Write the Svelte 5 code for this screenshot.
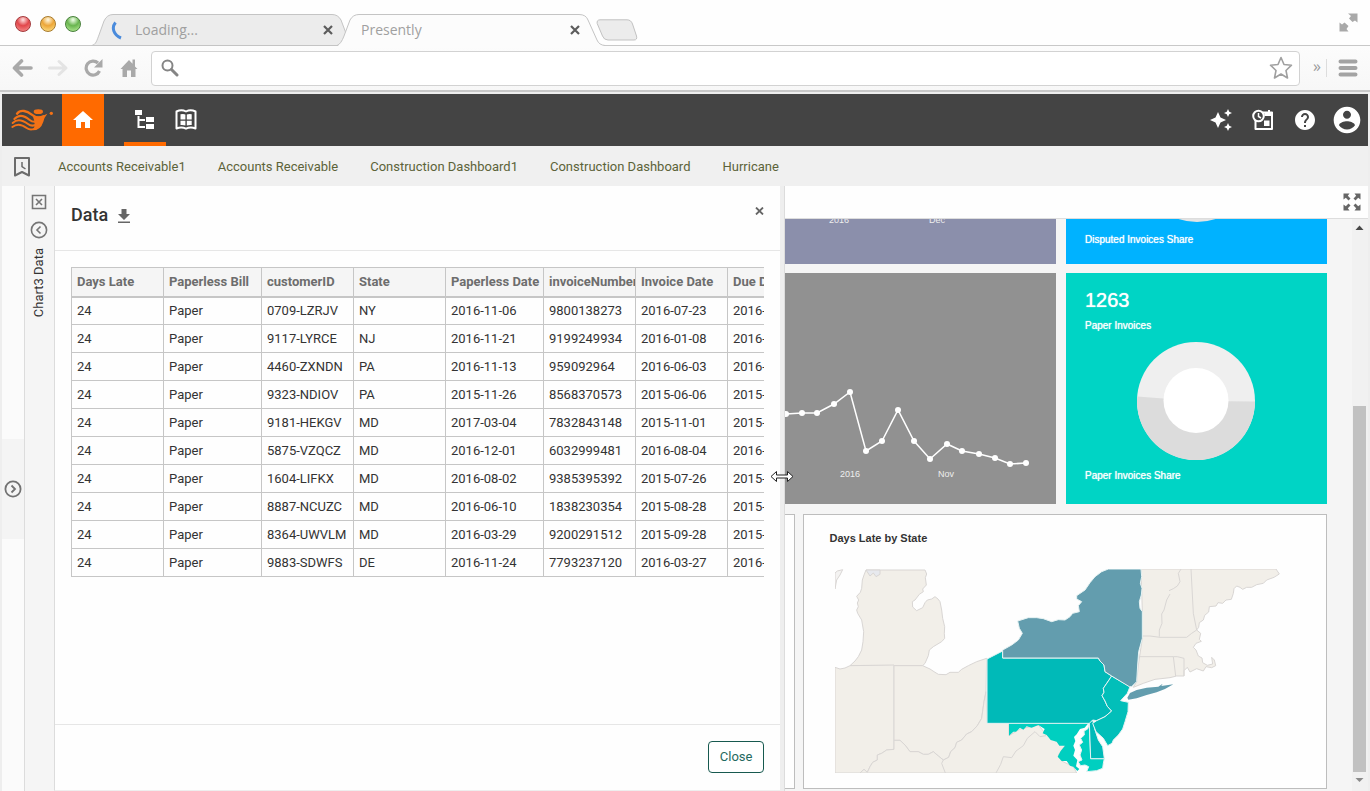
<script>
  const shortcuts = [
    'Accounts Receivable1',
    'Accounts Receivable',
    'Construction Dashboard1',
    'Construction Dashboard',
    'Hurricane'
  ];

  const columns = [
    { name: 'Days Late', width: 92 },
    { name: 'Paperless Bill', width: 98 },
    { name: 'customerID', width: 92 },
    { name: 'State', width: 92 },
    { name: 'Paperless Date', width: 98 },
    { name: 'invoiceNumber', width: 92 },
    { name: 'Invoice Date', width: 92 },
    { name: 'Due Date', width: 92 }
  ];
  const tableWidth = columns.reduce((sum, c) => sum + c.width, 0);

  const rows = [
    ['24', 'Paper', '0709-LZRJV', 'NY', '2016-11-06', '9800138273', '2016-07-23', '2016-08-22'],
    ['24', 'Paper', '9117-LYRCE', 'NJ', '2016-11-21', '9199249934', '2016-01-08', '2016-02-07'],
    ['24', 'Paper', '4460-ZXNDN', 'PA', '2016-11-13', '959092964', '2016-06-03', '2016-07-03'],
    ['24', 'Paper', '9323-NDIOV', 'PA', '2015-11-26', '8568370573', '2015-06-06', '2015-07-06'],
    ['24', 'Paper', '9181-HEKGV', 'MD', '2017-03-04', '7832843148', '2015-11-01', '2015-12-01'],
    ['24', 'Paper', '5875-VZQCZ', 'MD', '2016-12-01', '6032999481', '2016-08-04', '2016-09-03'],
    ['24', 'Paper', '1604-LIFKX', 'MD', '2016-08-02', '9385395392', '2015-07-26', '2015-08-25'],
    ['24', 'Paper', '8887-NCUZC', 'MD', '2016-06-10', '1838230354', '2015-08-28', '2015-09-27'],
    ['24', 'Paper', '8364-UWVLM', 'MD', '2016-03-29', '9200291512', '2015-09-28', '2015-10-28'],
    ['24', 'Paper', '9883-SDWFS', 'DE', '2016-11-24', '7793237120', '2016-03-27', '2016-04-26']
  ];

  const points = [
    [1, 141], [17, 140], [32, 140], [49, 131], [65, 119], [81, 178], [97, 168], [113, 137],
    [129, 168], [145, 186], [162, 171], [177, 178], [194, 181], [210, 185], [225, 191], [241, 190]
  ];
  const line = points.map((p) => p.join(',')).join(' ');
</script>

<div class="window">
  <header class="tabstrip">
    <div class="lights">
      <span class="light red"></span><span class="light amber"></span><span class="light green"></span>
    </div>
    <div class="tab first">
      <svg class="shape" width="256" height="32" viewBox="0 0 256 32" aria-hidden="true">
        <path d="M0.500 31.500C5 31 6 26 8 21L13 7Q16 .5 22 .5H241Q247 .5 250 6L256 22 253 30Q252 31.500 249 31.500Z" fill="#ececec" stroke="#c4c4c4" />
      </svg>
      <svg class="spinner" width="14" height="20" viewBox="0 0 14 20" aria-hidden="true">
        <path d="M4.500 2.500C0 8 3 15 10 18" fill="none" stroke="#4a8bdc" stroke-width="3" />
      </svg>
      <span class="title">Loading...</span>
      <button class="x" aria-label="Close tab"><svg width="10" height="10" viewBox="0 0 10 10"><path d="M1 1l8 8M9 1l-8 8" stroke="#5c5c5c" stroke-width="2.200" /></svg></button>
    </div>
    <div class="tab second">
      <svg class="shape" width="268" height="34" viewBox="0 0 268 34" aria-hidden="true">
        <path d="M0 33L2 30.500Q5 28 7 22L13 6Q16 .5 22 .5H242Q249 .5 251 6L260 26Q262 31 268 31.500V34H0Z" fill="#fcfcfc" />
        <path d="M0 31.500Q4 30 7 22L13 6Q16 .5 22 .5H242Q249 .5 251 6L260 26Q262 31 268 31.500" fill="none" stroke="#c4c4c4" />
      </svg>
      <span class="title">Presently</span>
      <button class="x" aria-label="Close tab"><svg width="10" height="10" viewBox="0 0 10 10"><path d="M1 1l8 8M9 1l-8 8" stroke="#5c5c5c" stroke-width="2.200" /></svg></button>
    </div>
    <button class="newtab" aria-label="New tab">
      <svg width="42" height="22" viewBox="0 0 42 22"><path d="M4 .8H31Q35 .8 36.500 5L40.500 17Q41.500 21 38 21H12Q8 21 6.500 17L1.200 4.500Q.5 1 4 .8Z" fill="#ececec" stroke="#c2c2c2" /></svg>
    </button>
    <button class="fullscreen" aria-label="Full screen">
      <svg width="19" height="19" viewBox="0 0 19 19" fill="#a9a9a9"><path d="M9 .5H18.500V9.500L16 7.500 13.500 9 10 5.500 12 3ZM.5 9.500L3 11.500 5.500 9.500 9.500 13 7.500 16 9.500 18.500H.5Z" /></svg>
    </button>
  </header>

  <div class="toolbar">
    <button aria-label="Back"><svg width="22" height="18" viewBox="0 0 22 18"><path d="M9.500 2L2.500 9L9.500 16M3 9H19" fill="none" stroke="#a9a9a9" stroke-width="3.600" stroke-linecap="round" stroke-linejoin="round" /></svg></button>
    <button aria-label="Forward"><svg width="22" height="18" viewBox="0 0 22 18"><path d="M11 2.500L18 9L11 15.500M17 9H1.500" fill="none" stroke="#e4e4e4" stroke-width="3" stroke-linecap="round" stroke-linejoin="round" /></svg></button>
    <button aria-label="Reload"><svg width="20" height="18" viewBox="0 0 20 18"><path d="M15.500 12A7 7 0 1 1 14 4" fill="none" stroke="#a9a9a9" stroke-width="3.200" /><path d="M18.500 0V8.500H10Z" fill="#a9a9a9" /></svg></button>
    <button class="homepage" aria-label="Home page"><svg width="18" height="18" viewBox="0 0 18 18" fill="#a9a9a9"><path d="M9 1L12.500 4.800V.5H15V7.500L17.500 10H15.500V18H11V11.500H7V18H2.500V10H.5Z" /></svg></button>
    <label class="omnibox">
      <svg width="18" height="18" viewBox="0 0 18 18" aria-hidden="true"><circle cx="6.500" cy="6.500" r="5" fill="none" stroke="#858585" stroke-width="2" /><path d="M10.500 10.500L16 16" stroke="#858585" stroke-width="3" stroke-linecap="round" /></svg>
      <input type="text" aria-label="Address" />
      <svg width="24" height="24" viewBox="0 0 24 24" aria-hidden="true"><path d="M12 1.500L15 8.500 22.500 9.200 17 14.500 18.500 22 12 18 5.500 22 7 14.500 1.500 9.200 9 8.500Z" fill="#fff" stroke="#a0a0a0" stroke-width="1.600" stroke-linejoin="round" /></svg>
    </label>
    <span class="more">»</span>
    <button class="menu" aria-label="Menu"><svg width="20" height="18" viewBox="0 0 20 18"><path d="M2.500 2.500H17.500M2.500 9H17.500M2.500 15.500H17.500" stroke="#a3a3a3" stroke-width="4" stroke-linecap="round" /></svg></button>
  </div>

  <div class="app">
    <nav class="appbar">
      <a class="logo" href="#home" aria-label="Logo">
        <svg width="46" height="26" viewBox="27 318 138 78" fill="none" stroke="#f47216" stroke-linecap="round" aria-hidden="true">
          <path d="M51 338C62 324 82 330 94 340S116 352 130 346" stroke-width="7" />
          <path d="M43 354C58 338 76 346 88 356S110 364 128 352" stroke-width="6" />
          <path d="M38 366C54 350 72 360 84 369S108 376 124 358" stroke-width="6" />
          <path d="M37 378C52 366 68 372 80 381S108 386 122 366" stroke-width="6" />
          <path d="M98 344Q118 352 142 338Q132 350 130 362Q122 388 98 388Q110 374 98 344Z" fill="#f47216" stroke="none" />
          <ellipse cx="115" cy="332" rx="14" ry="7" fill="#f47216" stroke="none" />
          <circle cx="154" cy="337" r="5" fill="#f47216" stroke="none" />
        </svg>
      </a>
      <button class="item home" aria-label="Home"><svg width="24" height="24" viewBox="0 0 24 24" fill="#fff"><path d="M10 20v-6h4v6h5v-8h3L12 3 2 12h3v8z" /></svg></button>
      <button class="item tree" aria-label="Repository"><svg width="24" height="24" viewBox="0 0 24 24" fill="#fff"><path d="M2 2h7v5H2zM13 9h8v5h-8zM13 16h8v5h-8zM4.500 8h2v3h5.500v2h-5.500v5h5.500v2h-7.500z" /></svg></button>
      <button class="item book" aria-label="Library">
        <svg width="24" height="24" viewBox="0 0 24 24"><path d="M2.500 3.500Q7.500 1 12 3.500Q16.500 1 21.500 3.500V20.500Q16.500 18.500 12 20.700Q7.500 18.500 2.500 20.500Z" fill="none" stroke="#fff" stroke-width="2" stroke-linejoin="round" /><path d="M6.500 6.300Q9.500 5.500 11.400 6.500V11.400H6.500ZM12.800 6.500Q15 5.500 17.700 6.300V11.400H12.800ZM6.500 12.700H11.400V17.600Q9.500 16.700 6.500 17ZM12.800 12.700H17.700V17Q15 16.700 12.800 17.600Z" fill="#fff" /></svg>
      </button>
      <span class="grow"></span>
      <button class="item" aria-label="Assistant"><svg width="24" height="24" viewBox="0 0 24 24" fill="#fff"><path d="M19 9l1.250-2.750L23 5l-2.750-1.250L19 1l-1.250 2.750L15 5l2.750 1.250L19 9zm-7.500.5L9 4 6.500 9.500 1 12l5.500 2.500L9 20l2.500-5.500L17 12l-5.500-2.500zM19 15l-1.250 2.750L15 19l2.750 1.250L19 23l1.250-2.750L23 19l-2.750-1.250L19 15z" /></svg></button>
      <button class="item" aria-label="Schedule">
        <svg width="24" height="24" viewBox="0 0 24 24"><path d="M12 4.500H21V21H4.500V12" fill="none" stroke="#fff" stroke-width="2" stroke-linejoin="round" /><path d="M13.500 4H22V8H13.500ZM17 2H19V4H17ZM13 12.500H18.500V18H13Z" fill="#fff" /><circle cx="7.500" cy="8" r="5.300" fill="#444" stroke="#fff" stroke-width="2" /><path d="M7.500 5V8.500L10 10" fill="none" stroke="#fff" stroke-width="1.500" /></svg>
      </button>
      <button class="item" aria-label="Help"><svg width="24" height="24" viewBox="0 0 24 24" fill="#fff"><path d="M12 2C6.480 2 2 6.480 2 12s4.480 10 10 10 10-4.480 10-10S17.520 2 12 2zm1 17h-2v-2h2v2zm2.070-7.750l-.9.920C13.450 12.900 13 13.500 13 15h-2v-.5c0-1.100.450-2.100 1.170-2.830l1.240-1.260c.370-.360.590-.860.590-1.410 0-1.100-.9-2-2-2s-2 .9-2 2H8c0-2.210 1.790-4 4-4s4 1.790 4 4c0 .880-.360 1.680-.930 2.250z" /></svg></button>
      <button class="item" aria-label="Account"><svg width="32" height="32" viewBox="0 0 24 24" fill="#fff"><path d="M12 2C6.480 2 2 6.480 2 12s4.480 10 10 10 10-4.480 10-10S17.520 2 12 2zm0 3c1.660 0 3 1.340 3 3s-1.340 3-3 3-3-1.340-3-3 1.340-3 3-3zm0 14.200c-2.500 0-4.710-1.280-6-3.220.03-1.990 4-3.080 6-3.080 1.990 0 5.970 1.090 6 3.080-1.290 1.940-3.500 3.220-6 3.220z" /></svg></button>
    </nav>

    <nav class="shortcuts">
      <svg width="18" height="22" viewBox="0 0 18 22" aria-hidden="true"><path d="M2 2H16V19.500L9 16 2 19.500Z" fill="none" stroke="#6b6b6b" stroke-width="2" stroke-linejoin="round" /><path d="M9 6V10.500L12.500 13" fill="none" stroke="#6b6b6b" stroke-width="1.500" /></svg>
      {#each shortcuts as name}
        <a href="#dashboard">{name}</a>
      {/each}
    </nav>

    <main>
      <aside class="rail">
        <button class="handle" aria-label="Expand"><svg width="18" height="18" viewBox="0 0 18 18"><circle cx="9" cy="9" r="7.600" fill="none" stroke="#727272" stroke-width="1.800" /><path d="M7.500 5.500L11 9L7.500 12.500" fill="none" stroke="#727272" stroke-width="1.800" /></svg></button>
      </aside>
      <aside class="strip">
        <button aria-label="Close pane"><svg width="16" height="16" viewBox="0 0 16 16"><path d="M1.500 1.500H14.500V14.500H1.500ZM5 5L11 11M11 5L5 11" fill="none" stroke="#757575" stroke-width="1.600" /></svg></button>
        <button aria-label="Collapse pane"><svg width="18" height="18" viewBox="0 0 18 18"><circle cx="9" cy="9" r="7.600" fill="none" stroke="#757575" stroke-width="1.600" /><path d="M10.500 5.500L7 9L10.500 12.500" fill="none" stroke="#757575" stroke-width="1.600" /></svg></button>
        <span class="vertical">Chart3 Data</span>
      </aside>

      <section class="panel">
        <header class="panel-head">
          <h1>Data</h1>
          <button aria-label="Download"><svg width="14" height="16" viewBox="0 0 14 16" fill="#666"><path d="M4.500 1H9.500V6H13L7 12 1 6H4.500ZM1 13.500H13V15H1Z" /></svg></button>
          <button class="dismiss" aria-label="Close data"><svg width="9" height="8" viewBox="0 0 9 8"><path d="M1 .5l7 7M8 .5l-7 7" stroke="#666" stroke-width="1.800" /></svg></button>
        </header>
        <div class="panel-body">
          <div class="clip">
            <table style="width: {tableWidth}px">
              <colgroup>
                {#each columns as c}<col style="width: {c.width}px" />{/each}
              </colgroup>
              <thead>
                <tr>{#each columns as c}<th scope="col">{c.name}</th>{/each}</tr>
              </thead>
              <tbody>
                {#each rows as row}
                  <tr>{#each row as cell}<td>{cell}</td>{/each}</tr>
                {/each}
              </tbody>
            </table>
          </div>
        </div>
        <footer class="panel-foot"><button class="close">Close</button></footer>
      </section>

      <div class="divider">
        <svg class="cursor" width="24" height="13" viewBox="0 0 24 13" aria-hidden="true"><path d="M1 6.500L6.500 1.500V5H17.500V1.500L23 6.500L17.500 11.500V8H6.500V11.500Z" fill="#fff" stroke="#222" /></svg>
      </div>

      <section class="dash">
        <div class="dash-bar">
          <button aria-label="Maximize"><svg width="18" height="18" viewBox="0 0 18 18" fill="#666"><path d="M.5.5H6.500L4.800 2.800 7.500 5.500 5.500 7.500 2.800 4.800.5 6.500ZM17.500.5V6.500L15.200 4.800 12.500 7.500 10.500 5.500 13.200 2.800 11.500 .5ZM.5 17.500V11.500L2.800 13.200 5.500 10.500 7.500 12.500 4.800 15.200 6.500 17.500ZM17.500 17.500H11.500L13.200 15.200 10.500 12.500 12.500 10.500 15.200 13.200 17.500 11.500Z" /></svg></button>
        </div>
        <div class="scroller">
          <div class="cards">
            <div class="row top">
              <article class="card purple">
                <svg width="271" height="45" viewBox="0 0 271 45"><text x="54" y="4" text-anchor="middle">2016</text><text x="152" y="4" text-anchor="middle">Dec</text></svg>
              </article>
              <article class="card blue">
                <svg class="ring" width="118" height="3" viewBox="0 0 118 3" aria-hidden="true"><circle cx="59" cy="-56" r="59" fill="#e3e3e3" /></svg>
                <span class="label">Disputed Invoices Share</span>
              </article>
            </div>
            <div class="row middle">
              <article class="card grey">
                <svg width="271" height="231" viewBox="0 0 271 231">
                  <polyline points={line} fill="none" stroke="#fff" stroke-width="1.500" />
                  {#each points as [x, y]}<circle cx={x} cy={y} r="3" fill="#fff" />{/each}
                  <text x="65" y="204" text-anchor="middle">2016</text><text x="161" y="204" text-anchor="middle">Nov</text>
                </svg>
              </article>
              <article class="card teal">
                <strong>1263</strong>
                <span class="label">Paper Invoices</span>
                <svg class="donut" width="118" height="118" viewBox="0 0 118 118" aria-hidden="true">
                  <circle cx="59" cy="59" r="59" fill="#efefef" />
                  <path d="M118 59.500A59 59 0 1 1 .2 54.500L59 59Z" fill="#dcdcdc" />
                  <circle cx="59" cy="58.500" r="32.500" fill="#fff" />
                </svg>
                <span class="label">Paper Invoices Share</span>
              </article>
            </div>
            <div class="row bottom">
              <article class="card plain sliver"></article>
              <article class="card plain map">
                <h2>Days Late by State</h2>
                <svg width="445" height="204" viewBox="135 192 1335 612" role="img" aria-label="Map of days late by state">
                  <g fill="#f2efe9" stroke="#d9d6d4" stroke-width="3" stroke-linejoin="round">
                    <path d="M135 204L142 198 158 194 150 210 140 225 135 252Z" fill="#f4f3f2" />
                    <path d="M228 195L405 195 410 207 406 218 409 240 398 252 400 260 388 268 375 285 367 290 368 306 380 317 398 308 405 293 412 285 425 282 435 275 444 282 450 290 455 315 458 340 464 365 463 385 464 400 455 410 430 425 418 435 415 452 405 475 398 482 180 482 195 468 205 455 215 435 219 410 221 380 215 345 203 325 200 315 205 305 202 294 206 285 200 274 211 262 215 250 217 225 222 210Z" />
                    <path d="M135 487L150 492 165 489 180 482 312 480 312 733 290 735 275 745 262 750 262 765 248 772 240 785 232 802 222 793 210 804H135Z" />
                    <path d="M312 482L398 482 420 492 432 500 445 508 468 509 480 502 505 502 515 493 535 482 560 470 590 460 588 560 582 590 575 640 562 662 545 680 530 687 515 705 500 712 495 728 482 740 476 757 460 765 445 753 430 740 415 748 400 748 385 740 360 740 345 720 330 706 312 706Z" />
                    <path d="M210 804L222 793 232 802 240 785 248 772 262 765 262 750 275 745 290 735 312 733V706L330 706 345 720 360 740 385 740 400 748 415 748 430 740 445 753 460 765 476 757 482 740 495 728 500 712 515 705 530 687 545 680 562 662 575 640 582 590 588 560 591 653 657 655V692L690 672 745 660 770 690 800 710 825 722 805 750 815 768 850 785 860 804Z" />
                    <path d="M460 765L455 775 466 804M618 804L632 778 640 755 665 758 678 738 700 722 712 700 735 680 750 695 768 692" fill="none" />
                    <path d="M228 195H270V208L258 215 250 204 240 213Z" fill="#e7e9ee" />
                  </g>
                  <g transform="translate(840 135)" fill="#f2efe9" stroke="#d9d6d4" stroke-width="3" stroke-linejoin="round">
                    <path d="M213 57H618L628 72 612 82 590 90 580 100 560 104 545 112 530 112 518 118 510 112 500 108 492 116 490 130 484 148 468 150 458 160 444 158 438 168 418 170 416 186 404 196 400 210 388 218 386 232 380 240 392 250 388 268 394 274 378 280 370 292 378 300 385 318 396 324 398 338 412 346 428 342 425 322 433 330 437 347 425 353 408 350 400 363 380 356 360 366 352 352 342 362V378L320 378 300 383 255 388 220 400 190 412 200 395 205 345 217 265 217 185Z" />
                    <path d="M333 57L325 70 330 95 322 108 310 116 297 122M300 132L290 150 282 180 275 192 276 220 268 240V260M217 258H240L270 262H330L350 262 365 250 380 240M363 57L370 190 380 240M208 320H310L317 378M310 320H322L342 325V378" fill="none" />
                  </g>
                  <g stroke="#e6f3f3" stroke-width="3" stroke-linejoin="round">
                    <path d="M657 655H895L884 668 870 672 860 688 852 696 856 708 850 722 855 735 850 752 862 765 858 784 868 792 862 798 850 785 840 782 830 768 815 768 803 755 812 738 825 722 808 722 800 710 782 705 770 690 758 685 764 672 745 660 725 668 710 664 700 674 690 668 678 680 670 680 657 692Z" fill="#00cfc0" stroke="none" />
                    <path d="M898 657L902 761H943L940 775 938 790 920 797 890 800 896 785 885 780 872 782 864 770 876 765 870 750 875 735 868 720 878 712 872 700 883 690 882 678 893 672Z" fill="#00cfc0" />
                    <path d="M898 652L908 645 915 675 925 705 938 725 943 761H902Z" fill="#00bab8" />
                    <path d="M591 462L638 438V459H925L930 468 942 480 945 500 965 513 955 528 940 550 942 562 936 572 945 588 952 604 965 618 945 635 920 647 908 645 898 655H591Z" fill="#00bab8" />
                    <path d="M965 513L1020 545 1012 565 992 587 1015 592 1014 620 1005 650 998 672 985 690 970 705 966 715 953 722 940 700 918 680 908 655 920 647 945 635 965 618 952 604 945 588 936 572 942 562 940 550 955 528Z" fill="#02bfb9" />
                    <path d="M638 459V435L665 420 685 405 697 385 688 370 683 348 715 338H740L760 341 785 350 805 344 825 345 840 335 848 325 868 320 865 302 875 290 860 282 860 272 885 255 900 233 915 215 935 200 955 192H1053L1055 215 1051 235 1056 250 1054 270 1048 290 1050 310 1057 320 1057 400 1046 440 1043 480 1040 530 1025 545 1018 545 965 513 945 500 942 480 930 468 925 459Z" fill="#639dae" />
                    <path d="M1012 578L1020 564 1040 555 1070 548 1105 545 1118 536 1114 543 1150 538 1125 552 1100 562 1070 570 1040 580 1015 584Z" fill="#639dae" stroke="none" />
                  </g>
                </svg>
              </article>
            </div>
          </div>
          <div class="scrollbar">
            <svg width="16" height="17" viewBox="0 0 16 17"><path d="M3.500 11L7.500 6.500 11.500 11Z" fill="#484848" /></svg>
            <div class="track"><span></span><span class="thumb"></span></div>
            <svg width="16" height="19" viewBox="0 0 16 19"><path d="M3.500 6L7.500 10 11.500 6Z" fill="#8a8a8a" /></svg>
          </div>
        </div>
      </section>
    </main>
  </div>
</div>

<style>
  :global(body) { margin: 0; background: #f5f5f5; }
  .window { display: flex; flex-direction: column; height: 100vh; min-height: 600px; overflow: hidden; font: 13px/16px Roboto, sans-serif; color: #333; }
  button { display: flex; align-items: center; justify-content: center; padding: 0; border: 0; background: none; font: inherit; cursor: pointer; }
  svg { display: block; flex: none; }
  a { text-decoration: none; color: inherit; }

  .tabstrip { display: flex; flex: none; height: 45px; border-bottom: 1px solid #c8c8c8; background: #fefefe; padding: 0 12px 0 15px; }
  .lights { display: flex; gap: 9px; width: 76px; padding-top: 16px; }
  .light { width: 14px; height: 14px; border: 1px solid; border-radius: 50%; }
  .red { border-color: #a3383a; background: radial-gradient(circle at 50% 20%, #fbd0d0 5%, #e2474b 45%, #f58a88 90%); }
  .amber { border-color: #a87b2d; background: radial-gradient(circle at 50% 20%, #fdf0d0 5%, #eda638 45%, #fbdc80 90%); }
  .green { border-color: #47803a; background: radial-gradient(circle at 50% 20%, #e2f7d8 5%, #69b54f 45%, #b0e790 90%); }
  .tab { position: relative; display: flex; align-items: center; height: 32px; margin-top: 14px; font: 500 14px/18px "Open Sans", sans-serif; color: #a0a0a0; }
  .tab .shape { position: absolute; left: 0; top: 0; }
  .tab > :not(.shape) { position: relative; }
  .first { width: 246px; }
  .second { width: 262px; z-index: 1; }
  .spinner { margin-left: 20px; }
  .title { flex: 1; margin-left: 10px; }
  .second .title { margin-left: 24px; }
  .x { width: 18px; height: 18px; }
  .second .x { margin-right: 15px; }
  .newtab { align-self: flex-start; margin: 19px 0 0 -3px; }
  .fullscreen { align-self: flex-start; margin: 13px 0 0 auto; }

  .toolbar { display: flex; flex: none; align-items: center; height: 44px; padding: 0 12px; background: linear-gradient(#fcfcfc, #f7f7f7); border-bottom: 2px solid #c8c8c8; }
  .toolbar > button { margin-right: 14px; }
  .toolbar .homepage { margin: 0 13px 0 2px; }
  .toolbar .menu { margin: 0; }
  .omnibox { display: flex; flex: 1; align-items: center; height: 33px; padding: 0 6px 0 9px; border: 1px solid #d2d2d2; border-radius: 4px; background: #fff; }
  .omnibox input { flex: 1; min-width: 0; border: 0; outline: 0; background: none; font: inherit; }
  .more { margin: 0 11px 0 13px; width: 13px; height: 18px; border-right: 1px solid #ddd; color: #999; font: 16px/15px "Open Sans", sans-serif; }

  .app { display: flex; flex: 1; flex-direction: column; min-height: 0; padding: 2px 2px 0; background: #eee; }
  .appbar { display: flex; flex: none; height: 52px; background: #444; }
  .logo { display: flex; align-items: center; justify-content: center; width: 60px; }
  .item { width: 42px; }
  .home { background: #ff6a00; margin-right: 20px; }
  .tree { padding-top: 4px; border-bottom: 4px solid #ff6a00; }
  .book { width: 40px; }
  .grow { flex: 1; }
  .shortcuts { display: flex; flex: none; align-items: center; gap: 32px; box-sizing: border-box; height: 40px; padding: 2px 0 0 11px; background: #f0f0f0; color: #5c6339; }
  .shortcuts svg { margin-right: -5px; }

  main { display: flex; flex: 1; min-height: 0; }
  .rail { display: flex; flex: none; align-items: center; width: 22px; border-right: 1px solid #dcdcdc; background: #fbfbfb; }
  .handle { width: 22px; height: 100px; background: #f4f4f4; }
  .strip { display: flex; flex: none; flex-direction: column; align-items: center; gap: 11px; width: 29px; padding: 8px 1px 0 0; box-sizing: border-box; background: #f5f5f5; }
  .vertical { writing-mode: vertical-rl; transform: rotate(180deg); margin-top: -2px; }
  .panel { display: flex; flex: 726; flex-direction: column; min-width: 0; border-left: 1px solid #dcdcdc; border-bottom: 1px solid #eee; background: #fefefe; }
  .panel-head { display: flex; align-items: flex-start; height: 64px; padding: 0 16px; border-bottom: 1px solid #e6e6e6; }
  h1 { margin: 17px 9px 0 0; font: 500 18px/24px Roboto, sans-serif; }
  .panel-head button { margin-top: 22px; }
  .panel-head .dismiss { margin-left: auto; margin-top: 21px; }
  .panel-body { flex: 1; min-height: 0; padding: 16px 16px 0; }
  .clip { overflow: hidden; }
  table { table-layout: fixed; border-collapse: collapse; }
  th, td { box-sizing: border-box; height: 28px; padding: 0 5px; border: 1px solid #c6c6c6; text-align: left; white-space: nowrap; overflow: hidden; }
  th { height: 29px; border-bottom: 2px solid #c6c6c6; background: #f5f5f5; color: #6d6d6d; font-weight: 700; }
  .panel-foot { display: flex; justify-content: flex-end; padding: 16px 16px 17px; border-top: 1px solid #e6e6e6; }
  .close { height: 32px; padding: 0 11px; border: 1px solid #17594f; border-radius: 4px; background: #fff; color: #1f6a60; }
  .divider { position: relative; flex: none; width: 4px; background: #eee; border-right: 1px solid #dcdcdc; }
  .cursor { position: absolute; left: -10px; top: 284px; z-index: 2; }

  .dash { display: flex; flex: 583; flex-direction: column; min-width: 0; background: #f5f5f5; }
  .dash-bar { display: flex; flex: none; align-items: center; justify-content: flex-end; height: 32px; padding-right: 7px; border-bottom: 1px solid #ddd; background: #fefefe; }
  .scroller { display: flex; flex: 1; min-height: 0; }
  .cards { display: flex; flex: 1; flex-direction: column; gap: 9px; min-width: 0; padding-right: 25px; }
  .row { display: grid; flex: none; grid-template-columns: minmax(0, 1fr) 261px; gap: 10px; }
  .top { height: 45px; }
  .middle { height: 232px; }
  .middle .card { margin-bottom: 1px; }
  .bottom { grid-template-columns: 10px minmax(0, 1fr); gap: 8px; height: 275px; }
  .card { display: flex; flex-direction: column; overflow: hidden; color: #fff; font-family: "Liberation Sans", sans-serif; }
  .card text { fill: #eee; font-size: 9px; }
  .purple { background: #8b8fab; }
  .blue { background: #00b2ff; padding: 0 19px; }
  .grey { background: #919191; }
  .teal { background: #00d4c5; padding: 15px 20px 0 19px; }
  .ring, .donut { margin: 0 auto; }
  .ring { margin-bottom: 10px; }
  .donut { margin: 8px auto; }
  .label { font-size: 10px; line-height: 16px; text-shadow: 0 0 1px #fff; }
  strong { margin-bottom: 6px; font-size: 20px; font-weight: 400; line-height: 24px; text-shadow: 0 0 1px #fff; }
  .plain { border: 1px solid #bdbdbd; box-sizing: border-box; background: #fefefe; }
  .sliver { border-left: 0; }
  .map { padding: 15px 25px 0; }
  .map svg { margin-left: 6px; }
  h2 { margin: 0 0 23px; color: #333; font-size: 11px; line-height: 16px; }
  .scrollbar { display: flex; flex: none; flex-direction: column; width: 16px; background: #f1f1f1; }
  .track { display: grid; flex: 1; grid-template-rows: 170fr 366fr; }
  .thumb { margin: 0 2px 0 1px; background: #c1c1c1; }
</style>
